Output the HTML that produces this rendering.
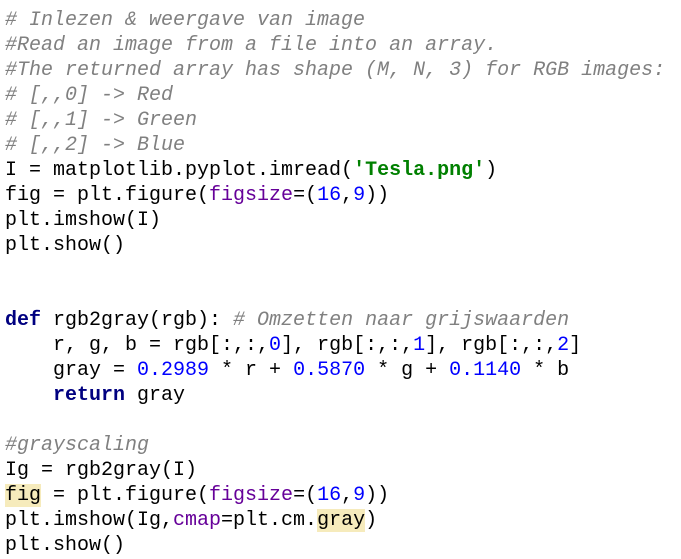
<!DOCTYPE html>
<html><head><meta charset="utf-8"><style>
html,body{margin:0;padding:0;background:#fff;width:681px;height:559px;overflow:hidden}
pre{margin:0;position:absolute;left:5px;top:8px;font-family:"Liberation Mono",monospace;font-size:20px;line-height:25px;color:#000}
.c{color:#808080;font-style:italic}
.k{color:#000080;font-weight:bold}
.n{color:#0000ff}
.p{color:#660099}
.s{color:#008000;font-weight:bold}
.h{background:#f6ebbc}
</style></head><body>
<pre><span class="c"># Inlezen &amp; weergave van image
#Read an image from a file into an array.
#The returned array has shape (M, N, 3) for RGB images:
# [,,0] -&gt; Red
# [,,1] -&gt; Green
# [,,2] -&gt; Blue</span>
I = matplotlib.pyplot.imread(<span class="s">'Tesla.png'</span>)
fig = plt.figure(<span class="p">figsize</span>=(<span class="n">16</span>,<span class="n">9</span>))
plt.imshow(I)
plt.show()


<span class="k">def</span> rgb2gray(rgb): <span class="c"># Omzetten naar grijswaarden</span>
    r, g, b = rgb[:,:,<span class="n">0</span>], rgb[:,:,<span class="n">1</span>], rgb[:,:,<span class="n">2</span>]
    gray = <span class="n">0.2989</span> * r + <span class="n">0.5870</span> * g + <span class="n">0.1140</span> * b
    <span class="k">return</span> gray

<span class="c">#grayscaling</span>
Ig = rgb2gray(I)
<span class="h">fig</span> = plt.figure(<span class="p">figsize</span>=(<span class="n">16</span>,<span class="n">9</span>))
plt.imshow(Ig,<span class="p">cmap</span>=plt.cm.<span class="h">gray</span>)
plt.show()</pre>
</body></html>
